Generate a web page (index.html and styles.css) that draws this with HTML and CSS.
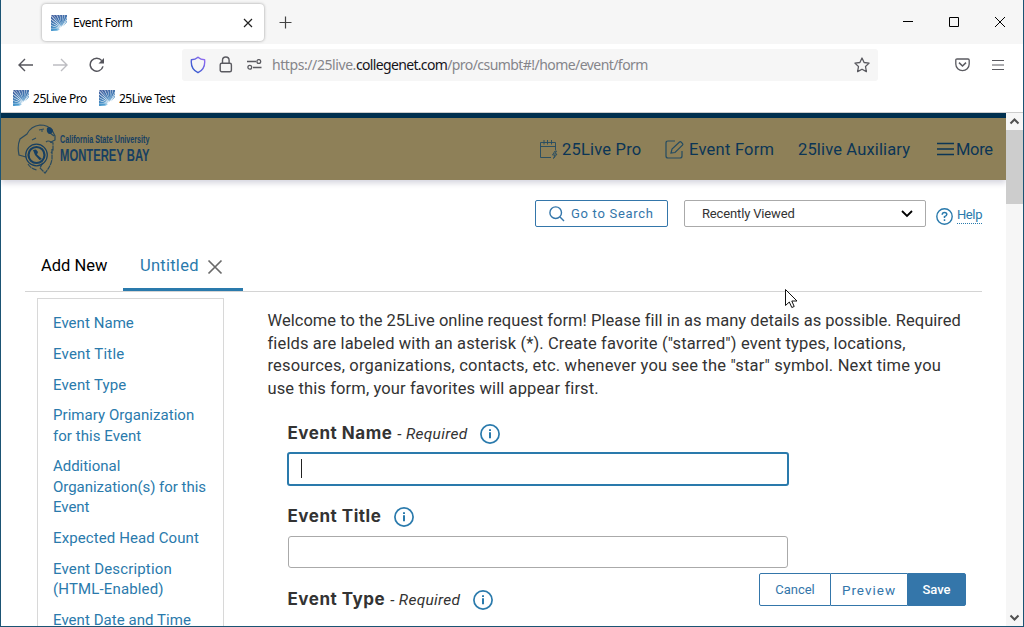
FILE: index.html
```html
<!DOCTYPE html>
<html lang="en">
<head>
<meta charset="utf-8">
<title>Event Form</title>
<link rel="stylesheet" href="styles.css">
</head>
<body>
<svg class="defs" width="0" height="0">
  <defs>
    <linearGradient id="rayFill" gradientUnits="userSpaceOnUse" x1="4" y1="0" x2="10" y2="16"><stop offset="0" stop-color="#44619f"/><stop offset=".5" stop-color="#4480b8"/><stop offset="1" stop-color="#55aede"/></linearGradient>
    <linearGradient id="shieldStroke" x1="1" y1="0" x2="0" y2="1"><stop offset="0" stop-color="#9a6cf5"/><stop offset="1" stop-color="#2458c8"/></linearGradient>
    <symbol id="rays" viewBox="0 0 16 16">
      <path fill="url(#rayFill)" d="M11 12L0 0H2.300ZM11 12L2.800 0H5.400ZM11 11.500L6 0H8.500ZM11 11L9 0H11.300ZM11 11L11.800 0H13.700ZM11 11L14.200 0H16V1.500ZM10.500 12L0 1V3.800ZM10 12.500L0 4.500V7.200ZM9.500 13L0 7.700V10.300ZM9 13.500L0 10.800V13.200ZM9 14L0 13.600V16H2ZM9 14.500L2.500 16H5.500ZM11.500 11L16 2.400V4.300ZM12 11.500L16 5.500V7Z"/>
    </symbol>
    <symbol id="info" viewBox="0 0 20 20"><circle cx="10" cy="10" r="9.1" fill="none" stroke="#2a7aac" stroke-width="1.7"/><path stroke="#2a7aac" stroke-width="2" d="M10 5.2V7M10 8.3V14.2"/></symbol>
  </defs>
</svg>
<div class="window">
  <header class="titlebar">
    <div class="tab">
      <svg class="fav" width="16" height="16"><use href="#rays"/></svg>
      <span class="tab-name">Event Form</span>
      <svg class="tab-close" width="10" height="10" viewBox="0 0 10 10"><path d="M1 1L9 9M9 1L1 9" stroke="#222" stroke-width="1.2"/></svg>
    </div>
    <svg class="plus" width="13" height="13" viewBox="0 0 13 13"><path d="M6.5 .5V12.5M.5 6.5H12.5" stroke="#444" stroke-width="1.2"/></svg>
    <div class="winbtns">
      <svg width="10" height="10"><path d="M0 4.5H10" stroke="#000"/></svg>
      <svg width="10" height="10"><path d="M.5 .5H9.5V9.5H.5Z" fill="none" stroke="#000"/></svg>
      <svg width="10" height="10"><path d="M0 0L10 10M10 0L0 10" stroke="#000"/></svg>
    </div>
  </header>
  <div class="toolbar">
    <svg class="back" width="15" height="14" viewBox="0 0 15 14"><path d="M7 1L1 7L7 13M1 7H15" fill="none" stroke="#55555c" stroke-width="1.4"/></svg>
    <svg class="fwd" width="15" height="14" viewBox="0 0 15 14"><path d="M8 1L14 7L8 13M14 7H0" fill="none" stroke="#bdbdc2" stroke-width="1.4"/></svg>
    <svg class="reload" width="16" height="16" viewBox="0 0 16 16"><path d="M12.8 3.6A6.5 6.5 0 1 0 14 9.4" fill="none" stroke="#55555c" stroke-width="1.5"/><path d="M15 1V6.5H9.5Z" fill="#55555c"/></svg>
    <div class="urlbar">
      <svg class="shield" width="16" height="18" viewBox="0 0 16 18"><path d="M8 1.2C6 3 3.5 3.7 1.4 3.8C.8 9 2.5 14 8 16.7C13.500 14 15.200 9 14.600 3.800C12.500 3.700 10 3 8 1.200Z" fill="none" stroke="url(#shieldStroke)" stroke-width="1.4"/></svg>
      <svg class="lock" width="14" height="17" viewBox="0 0 14 17"><rect x="1.200" y="7.200" width="11.200" height="8.600" rx="1.500" fill="none" stroke="#5a5a60" stroke-width="1.400"/><path d="M3.500 7V4.300A3.300 3.300 0 0 1 10.100 4.300V7" fill="none" stroke="#5a5a60" stroke-width="1.400"/></svg>
      <svg class="perm" width="15" height="11" viewBox="0 0 15 11"><path d="M0 2.500H9M6 8.500H14.500" stroke="#5a5a60" stroke-width="1.300"/><circle cx="11.800" cy="2.500" r="1.900" fill="none" stroke="#5a5a60" stroke-width="1.300"/><circle cx="2.800" cy="8.300" r="1.900" fill="none" stroke="#5a5a60" stroke-width="1.300"/></svg>
      <span class="url"><span class="u1">https://25live.</span><b class="u2">collegenet.com</b><span class="u3">/pro/csumbt#!/home/event/form</span></span>
      <svg class="star" width="16" height="16" viewBox="0 0 16 16"><path d="M8 1L10.100 5.500L15.100 6.100L11.500 9.500L12.400 14.600L8 12.200L3.600 14.600L4.500 9.500L.9 6.100L5.900 5.500Z" fill="none" stroke="#5a5a60" stroke-width="1.300" stroke-linejoin="round"/></svg>
    </div>
    <svg class="pocket" width="15" height="14" viewBox="0 0 15 14"><path d="M2 1H13Q14.200 1 14.200 2.200V6A6.700 6.700 0 0 1 .8 6V2.200Q.8 1 2 1Z" fill="none" stroke="#5a5a60" stroke-width="1.300"/><path d="M4 4.600L7.500 8L11 4.600" fill="none" stroke="#5a5a60" stroke-width="1.500"/></svg>
    <svg class="menu" width="12" height="10"><path d="M0 .5H12M0 5H12M0 9.500H12" stroke="#5a5a60" stroke-width="1.200"/></svg>
  </div>
  <div class="bookmarks">
    <svg width="16" height="16"><use href="#rays"/></svg><span class="bm bm1">25Live Pro</span>
    <svg width="16" height="16"><use href="#rays"/></svg><span class="bm bm2">25Live Test</span>
  </div>
  <div class="viewport">
    <main class="page">
      <nav class="site">
        <svg class="logo" width="150" height="52" viewBox="0 0 150 52">
          <g fill="none" stroke="#2b4a5e" stroke-width="1.200">
            <path d="M9 34L2 32Q0 23 3 16L10 11Q14 3 23 2Q31 2 35 7L38 13V17L34 19Q31 17 29 19"/>
            <path d="M33 19L36 20V27L34 30M35 26V36Q34 43 28 50L23 45L26 39M11 41Q14 46 20 47M15 17L19 15M33 10L37 13" stroke-dasharray="5 .6"/>
            <path d="M22 7L27 6M24 8H26"/>
          </g>
          <g fill="none" stroke="#173f62"><circle cx="19.500" cy="32" r="10.800" stroke-width="1.200"/><circle cx="19.500" cy="32" r="8" stroke-width="2.200"/></g>
          <path fill="#173f62" d="M30 5Q33 2 36 7Q36 11 32 11Q29 9 30 5M16 27L19 26.500L21 29L20 31.500L25 36L22.500 37L18 32Z"/>
          <g fill="#173f62" class="logo-text">
            <text x="43" y="20" font-size="10.500" textLength="89.500" lengthAdjust="spacingAndGlyphs">California State University</text>
            <text x="43" y="38" font-size="16.500" textLength="89.500" lengthAdjust="spacingAndGlyphs">MONTEREY BAY</text>
          </g>
        </svg>
        <a class="nav n1"><svg width="18" height="19" viewBox="0 0 18 19"><path d="M.5 6.500H15.500M15.500 10V2.500H.5V17.500H11M4 0V4.500M7.500 0V4.500M11.500 0V4.500M15 11L12.500 15H15L13.500 18.500L17 14H14.800L16.500 11Z" fill="none" stroke="#244b62" stroke-width=".9"/></svg><span>25Live Pro</span></a>
        <a class="nav n2"><svg width="19" height="19" viewBox="0 0 19 19"><path d="M10 1H3Q1 1 1 3V16Q1 18 3 18H15Q17 18 17 16V11" fill="none" stroke="#244b62" stroke-width="1.200"/><path d="M6 13L7 9L14.500 2Q15.300 1.300 16 2L17.600 3.700Q18.200 4.500 17.500 5.200L10 12.500Z" fill="none" stroke="#244b62" stroke-width="1.200"/></svg><span>Event Form</span></a>
        <a class="nav n3"><span>25live Auxiliary</span></a>
        <a class="nav n4"><svg width="17" height="14"><path d="M0 1.500H17M0 7H17M0 12.500H17" stroke="#0b3556" stroke-width="1.700"/></svg><span>More</span></a>
      </nav>
      <div class="actions">
        <button class="search"><svg width="16" height="16" viewBox="0 0 16 16"><circle cx="6.700" cy="6.700" r="5.800" fill="none" stroke="#3476aa" stroke-width="1.400"/><path d="M11 11L15 15" stroke="#3476aa" stroke-width="1.400"/></svg><span>Go to Search</span></button>
        <div class="recent"><span>Recently Viewed</span><svg width="12" height="8" viewBox="0 0 12 8"><path d="M1 1L6 6L11 1" fill="none" stroke="#000" stroke-width="1.800"/></svg></div>
        <a class="help"><svg width="17" height="17" viewBox="0 0 17 17"><circle cx="8.500" cy="8.500" r="7.700" fill="none" stroke="#2a7aac" stroke-width="1.400"/><path d="M6.200 6.700Q6.300 4.500 8.500 4.500Q10.800 4.500 10.800 6.500Q10.800 7.800 8.500 8.600V10M8.500 11.300V13" fill="none" stroke="#2a7aac" stroke-width="1.500"/></svg><span>Help</span></a>
      </div>
      <div class="tabs">
        <span class="add">Add New</span>
        <span class="current"><span>Untitled</span><svg width="16" height="16" viewBox="0 0 16 16"><path d="M1.500 1.500L14.500 14.500M14.500 1.500L1.500 14.500" stroke="#6a6a6a" stroke-width="1.700"/></svg></span>
      </div>
      <div class="body">
        <aside class="side">
          <a class="s1">Event Name</a><a class="s2">Event Title</a><a class="s3">Event Type</a>
          <a class="s4">Primary Organization<br>for this Event</a>
          <a class="s5">Additional<br>Organization(s) for this<br>Event</a>
          <a class="s6">Expected Head Count</a>
          <a class="s7">Event Description<br>(HTML-Enabled)</a>
          <a class="s8">Event Date and Time</a>
        </aside>
        <section class="form">
          <p class="welcome"><span class="w1">Welcome to the 25Live online request form! Please fill in as many details as possible. Required</span><br><span class="w2">fields are labeled with an asterisk (*). Create favorite ("starred") event types, locations,</span><br><span class="w3">resources, organizations, contacts, etc. whenever you see the "star" symbol. Next time you</span><br><span class="w4">use this form, your favorites will appear first.</span></p>
          <div class="label"><b>Event Name</b><i>- Required</i><svg width="20" height="20"><use href="#info"/></svg></div>
          <div class="input focus"><span class="caret"></span></div>
          <div class="label l2"><b>Event Title</b><svg width="20" height="20"><use href="#info"/></svg></div>
          <div class="input"></div>
          <div class="label l3"><b>Event Type</b><i>- Required</i><svg width="20" height="20"><use href="#info"/></svg></div>
        </section>
      </div>
    </main>
    <div class="scroll">
      <svg width="17" height="17"><path d="M4.500 10.500L8.500 6.500L12.500 10.500" fill="none" stroke="#505050" stroke-width="2"/></svg>
      <div class="thumb"></div>
      <svg class="down" width="17" height="17"><path d="M4.500 6.500L8.500 10.500L12.500 6.500" fill="none" stroke="#505050" stroke-width="2"/></svg>
    </div>
  </div>
  <div class="buttons"><button class="cancel">Cancel</button><button class="preview">Preview</button><button class="save">Save</button></div>
  <svg class="cursor" width="13" height="20" viewBox="0 0 13 20"><path d="M.5 .5V16.500L4.300 13L6.800 18.500L9.200 17.500L6.800 12H12Z" fill="#fff" stroke="#111"/></svg>
</div>
</body>
</html>
```

FILE: styles.css
```css
* { box-sizing: border-box; }
body { margin: 0; font-family: Roboto, "Open Sans", sans-serif; }
svg { display: block; flex: none; }
.defs { position: absolute; }
.window { position: relative; width: 1024px; height: 627px; overflow: hidden; display: flex; flex-direction: column; background: #fff; border: solid #1b5474; border-width: 0 1px 1px; }
button { font: inherit; padding: 0; margin: 0; background: #fff; white-space: nowrap; }
span, b, i, a { white-space: nowrap; }

/* browser chrome */
.titlebar { flex: none; height: 44px; background: #f6f6f6; display: flex; align-items: flex-start; font-family: "Noto Sans", sans-serif; }
.tab { width: 222px; height: 37px; margin: 4px 0 0 41px; padding: 0 11px 0 9px; display: flex; align-items: center; background: #fff; border-radius: 4px; box-shadow: 0 0 3px #999; }
.tab-name { margin-left: 6px; font-size: 12px; letter-spacing: -.45px; flex: 1; }
.plus { margin: 16px 0 0 15px; }
.winbtns { margin: 17px 18px 0 auto; display: flex; gap: 36px; }
.toolbar { flex: none; height: 41px; display: flex; align-items: center; font-family: "Noto Sans", sans-serif; }
.back { margin-left: 17px; }
.fwd { margin-left: 20px; }
.reload { margin-left: 21px; }
.urlbar { margin-left: 77px; width: 696px; height: 32px; border-radius: 3px; background: #f6f6f6; display: flex; align-items: center; padding-left: 8px; }
.lock { margin-left: 13px; }
.perm { margin-left: 14px; }
.url { margin-left: 10px; font-size: 14px; color: #85858a; flex: 1; }
.url b { font-weight: 400; color: #15141a; }
.u1 { letter-spacing: -.42px; }
.u2 { letter-spacing: -.66px; }
.u3 { letter-spacing: -.56px; }
.star { margin-right: 8px; }
.pocket { margin-left: 77px; }
.menu { margin-left: 22px; }
.bookmarks { flex: none; height: 28px; padding: 0 0 1px 12px; display: flex; align-items: center; border-bottom: 1px solid #ccc; font: 12px "Noto Sans", sans-serif; }
.bm { margin-left: 4px; letter-spacing: -.45px; width: 66px; }
.bm2 { width: 60px; letter-spacing: -.55px; }

.viewport { flex: 1; min-height: 0; display: flex; }
.page { width: 1005px; overflow: hidden; }
.site { height: 67px; border-top: 5px solid #00304f; background: #8e8058; box-shadow: 0 3px 6px #d4d4de; display: flex; align-items: center; color: #0b3556; font-size: 16.500px; }
.logo { margin: -1px 0 0 16px; }
.logo-text { font-family: "Liberation Sans", sans-serif; font-weight: 700; }
.nav { display: flex; align-items: center; }
.n1 { margin-left: 373px; width: 125px; gap: 4px; letter-spacing: .2px; }
.n2 { width: 133px; gap: 5px; letter-spacing: .25px; }
.n3 { width: 139px; letter-spacing: .15px; }
.n4 { gap: 2px; letter-spacing: -.3px; }
.actions { height: 27px; margin-top: 20px; padding-left: 534px; display: flex; font-size: 13px; }
.search { width: 133px; border: 1px solid #3476aa; border-radius: 2px; color: #3476aa; display: flex; align-items: center; padding-left: 13px; letter-spacing: .7px; }
.search span { margin-left: 6px; }
.recent { margin-left: 16px; width: 242px; border: 1px solid #aaa; border-radius: 2px; display: flex; align-items: center; justify-content: space-between; padding: 0 12px 0 17px; color: #333; letter-spacing: -.15px; }
.help { margin: 4px 0 0 10px; display: flex; align-items: center; gap: 4px; color: #2a7aac; height: 25px; letter-spacing: -.4px; }
.help span { border-bottom: 1px dotted #2a7aac; line-height: 16px; margin-top: -3px; }
.tabs { height: 65px; margin: 0 24px; border-bottom: 1px solid #d4d4d4; display: flex; align-items: flex-end; font-size: 16.500px; }
.add { width: 98px; height: 51px; line-height: 52px; padding-left: 16px; }
.current { width: 120px; height: 51px; padding: 2px 0 0 17px; border-bottom: 3px solid #2a7aac; display: flex; align-items: center; gap: 8px; color: #2a7aac; letter-spacing: .25px; }
.current svg { margin-top: 4px; }
.body { display: flex; align-items: flex-start; padding-left: 36px; }
.side { width: 187px; height: 345px; margin-top: 6px; border: 1px solid #d8d8d8; padding: 14px 0 0 15px; color: #2a7aac; font-size: 15px; line-height: 20.400px; letter-spacing: .05px; }
.side a { display: block; margin-bottom: 10.350px; }
.s2 { letter-spacing: .2px; }
.s3 { letter-spacing: .15px; }
.s5 { letter-spacing: -.03px; }
.s6 { letter-spacing: .1px; }
.s7 { letter-spacing: .15px; }
.form { margin-left: 43.500px; color: #333; }
.welcome { margin: 18px 0 0; font-size: 16.500px; line-height: 22.700px; }
.w1 { letter-spacing: .03px; }
.w2 { letter-spacing: .13px; }
.w3 { letter-spacing: .18px; }
.w4 { letter-spacing: .125px; }
.label { height: 20px; margin: 23px 0 0 20px; display: flex; align-items: center; font-size: 17px; }
.label b { font-family: Inter, sans-serif; margin-top: -2px; letter-spacing: .52px; }
.label i { margin-left: 5px; font-size: 15.500px; letter-spacing: .3px; }
.label svg { margin-left: 13px; }
.input { width: 500px; height: 32px; margin: 9px 0 0 20px; border: 1px solid #aaa; border-radius: 3px; }
.focus { width: 502px; height: 34px; margin: 8px 0 0 19px; border: 2px solid #2a7aac; padding: 5px 0 0 12px; }
.caret { display: block; width: 1px; height: 19px; background: #222; }
.l2 { margin-top: 21px; }
.l3 { margin-top: 22px; }
.scroll { width: 17px; background: #f6f6f6; display: flex; flex-direction: column; }
.thumb { height: 74px; background: #cdcdcd; }
.down { margin-top: auto; }

/* action bar floating over the form */
.buttons { position: absolute; left: 758px; top: 573px; width: 207px; height: 33px; display: flex; font-size: 13px; letter-spacing: .9px; }
.buttons button { border: 1px solid #3476aa; color: #3476aa; }
.cancel { width: 72px; border-radius: 2px 0 0 2px; }
.buttons .preview { width: 76px; border-left: 0; border-right: 0; font-size: 13.500px; letter-spacing: 1px; }
.buttons .save { width: 59px; background: #3476aa; color: #fff; font-weight: 500; border-radius: 0 2px 2px 0; }
.cursor { position: absolute; left: 784px; top: 289px; }
```
